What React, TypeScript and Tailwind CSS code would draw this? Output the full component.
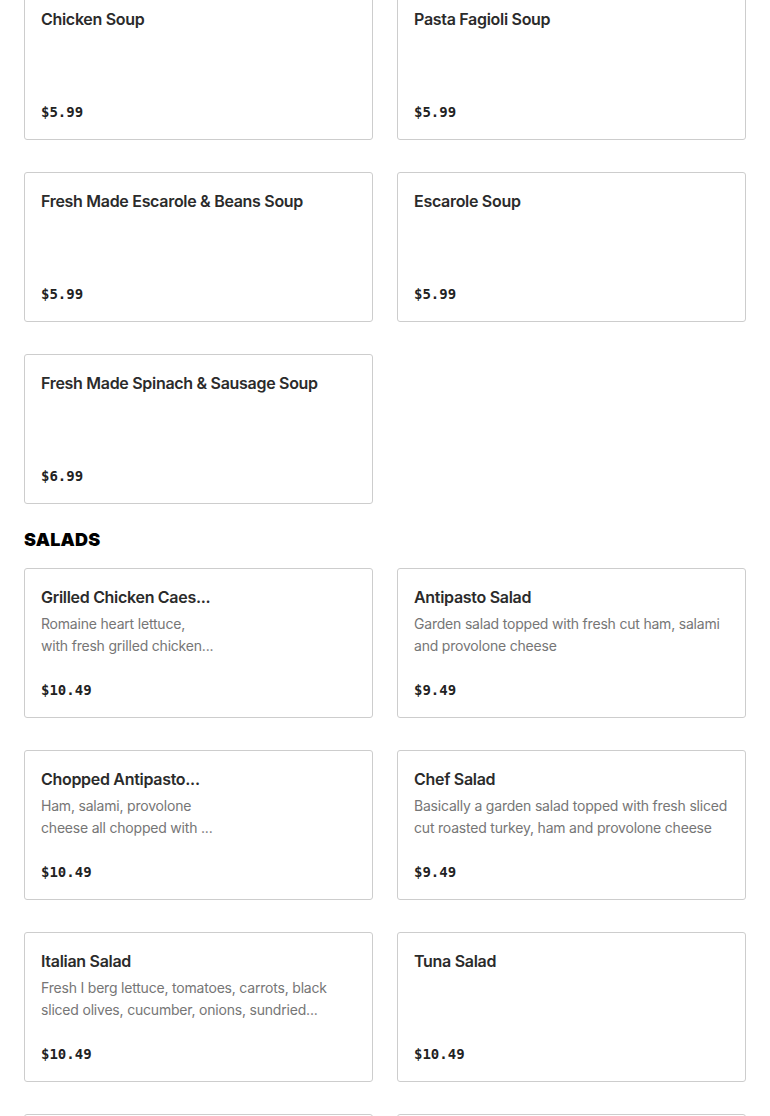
import React from 'react';

type Item = {
  name: string;
  price: string;
  lines?: string[];
  narrow?: boolean;
};

const soups: Item[] = [
  { name: 'Chicken Soup', price: '$5.99' },
  { name: 'Pasta Fagioli Soup', price: '$5.99' },
  { name: 'Fresh Made Escarole & Beans Soup', price: '$5.99' },
  { name: 'Escarole Soup', price: '$5.99' },
  { name: 'Fresh Made Spinach & Sausage Soup', price: '$6.99' },
];

const salads: Item[] = [
  {
    name: 'Grilled Chicken Caes...',
    price: '$10.49',
    lines: ['Romaine heart lettuce,', 'with fresh grilled chicken...'],
    narrow: true,
  },
  {
    name: 'Antipasto Salad',
    price: '$9.49',
    lines: ['Garden salad topped with fresh cut ham, salami', 'and provolone cheese'],
  },
  {
    name: 'Chopped Antipasto...',
    price: '$10.49',
    lines: ['Ham, salami, provolone', 'cheese all chopped with ...'],
    narrow: true,
  },
  {
    name: 'Chef Salad',
    price: '$9.49',
    lines: ['Basically a garden salad topped with fresh sliced', 'cut roasted turkey, ham and provolone cheese'],
  },
  {
    name: 'Italian Salad',
    price: '$10.49',
    lines: ['Fresh I berg lettuce, tomatoes, carrots, black', 'sliced olives, cucumber, onions, sundried...'],
  },
  { name: 'Tuna Salad', price: '$10.49' },
];

function MenuCard({ item }: { item?: Item }) {
  return (
    <div className="h-[150px] flex flex-col border border-[#cdcdcd] rounded-[3px] bg-white px-4 pt-4 pb-4">
      {item && (
        <>
          <div className={item.narrow ? 'w-[180px]' : ''}>
            <h3 className="text-[16px] leading-6 font-semibold tracking-[-0.3px] text-[#2b2b2b] whitespace-nowrap">
              {item.name}
            </h3>
            {item.lines && (
              <p className="mt-1 text-[14px] leading-[22px] tracking-[-0.2px] text-[#767676]">
                {item.lines.map((l) => (
                  <span key={l} className="block whitespace-nowrap">
                    {l}
                  </span>
                ))}
              </p>
            )}
          </div>
          <div className="mt-auto mb-px text-[14px] leading-5 font-bold text-[#222] font-['DejaVu_Sans_Mono',monospace]">
            {item.price}
          </div>
        </>
      )}
    </div>
  );
}

export default function App() {
  return (
    <div className="h-[1116px] overflow-hidden bg-white font-['Inter','Liberation_Sans',sans-serif]">
      <div className="px-6 -mt-[10px]">
        <div className="grid grid-cols-2 gap-x-6 gap-y-8">
          {soups.map((s) => (
            <MenuCard key={s.name} item={s} />
          ))}
        </div>

        <h2 className="mt-6 mb-4 text-[18px] leading-6 font-black tracking-[0.2px] text-black uppercase">
          Salads
        </h2>
        <div className="grid grid-cols-2 gap-x-6 gap-y-8">
          {salads.map((s) => (
            <MenuCard key={s.name} item={s} />
          ))}
          <MenuCard />
          <MenuCard />
        </div>
      </div>
    </div>
  );
}
